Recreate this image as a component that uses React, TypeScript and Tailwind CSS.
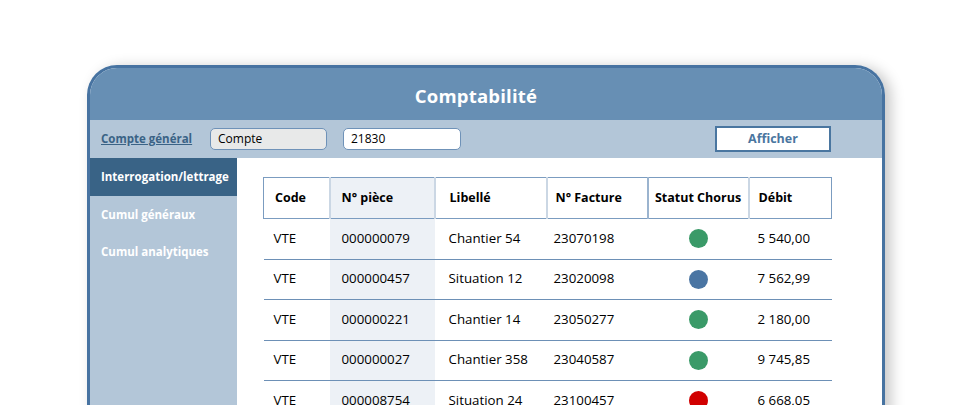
import React from 'react';

const rows = [
  { code: 'VTE', piece: '000000079', libelle: 'Chantier 54', facture: '23070198', statut: 'green', debit: '5 540,00' },
  { code: 'VTE', piece: '000000457', libelle: 'Situation 12', facture: '23020098', statut: 'blue', debit: '7 562,99' },
  { code: 'VTE', piece: '000000221', libelle: 'Chantier 14', facture: '23050277', statut: 'green', debit: '2 180,00' },
  { code: 'VTE', piece: '000000027', libelle: 'Chantier 358', facture: '23040587', statut: 'green', debit: '9 745,85' },
  { code: 'VTE', piece: '000008754', libelle: 'Situation 24', facture: '23100457', statut: 'red', debit: '6 668,05' },
];

const dotColors: Record<string, string> = {
  green: 'bg-[#3a9a68]',
  blue: 'bg-[#4a75a3]',
  red: 'bg-[#d10000]',
};

export default function App() {
  return (
    <div className="h-[405px] w-[964px] overflow-hidden bg-white pt-[65px] pl-[87px] font-['Open_Sans',sans-serif] text-black">
      <div className="w-[798px] h-[420px] rounded-t-[30px] border-[3px] border-b-0 border-[#4773a1] overflow-hidden shadow-[6px_2px_14px_rgba(0,0,0,0.22)]">
        {/* title bar */}
        <div className="h-[52px] bg-[#678fb4] flex items-center justify-center pr-[20px]">
          <h1 className="text-white font-bold text-[18.5px] tracking-[0.2px] mt-[3px]">Comptabilité</h1>
        </div>

        {/* toolbar */}
        <div className="h-[38px] bg-[#b3c6d8] flex items-center pl-[11px] pr-[51px]">
          <a className="text-[11.5px] font-bold text-[#3a6386] underline w-[109px]">Compte général</a>
          <div className="w-[117px] h-[22px] rounded-[5px] border border-[#6f92b8] bg-[#e8e9e9] text-[12px] flex items-center pl-[7px]">
            Compte
          </div>
          <div className="ml-[16px] w-[118px] h-[22px] rounded-[5px] border border-[#6f92b8] bg-white text-[12px] flex items-center pl-[7px]">
            21830
          </div>
          <button className="ml-auto w-[116px] h-[26px] border-2 border-[#4a76a0] bg-white text-[12.5px] font-bold text-[#4a76a0]">
            Afficher
          </button>
        </div>

        {/* body */}
        <div className="flex h-full">
          <nav className="w-[147px] shrink-0 bg-[#b3c6d8]">
            <div className="h-[38px] bg-[#396386] text-white text-[11.5px] font-bold flex items-center pl-[11px]">
              Interrogation/lettrage
            </div>
            <div className="h-[37px] text-white text-[11.5px] font-bold flex items-center pl-[11px]">Cumul généraux</div>
            <div className="h-[37px] text-white text-[11.5px] font-bold flex items-center pl-[11px]">Cumul analytiques</div>
          </nav>

          <div className="flex-1 bg-white pt-[19px] pl-[26px]">
            <table className="w-[568px] border-collapse table-fixed text-[13.3px]">
              <colgroup>
                <col className="w-[66px]" />
                <col className="w-[105px]" />
                <col className="w-[112px]" />
                <col className="w-[101px]" />
                <col className="w-[101px]" />
                <col className="w-[83px]" />
              </colgroup>
              <thead>
                <tr className="h-[41px] text-[12.5px] font-bold">
                  <th className="text-left pl-[11px] border border-[#7b9cc0] border-r-2 border-r-[#cbd7e4]">Code</th>
                  <th className="text-left pl-[11px] bg-[#edf1f6] border-y border-[#7b9cc0] border-r-2 border-r-[#cbd7e4]">N° pièce</th>
                  <th className="text-left pl-[14px] border-y border-[#7b9cc0] border-r-2 border-r-[#cbd7e4]">Libellé</th>
                  <th className="text-left pl-[8px] border-y border-[#7b9cc0] border-r-2 border-r-[#9bb4cf]">N° Facture</th>
                  <th className="text-center border-y border-[#7b9cc0] border-r-2 border-r-[#cbd7e4]">Statut Chorus</th>
                  <th className="text-left pl-[9px] border border-[#7b9cc0] border-l-0">Débit</th>
                </tr>
              </thead>
              <tbody>
                {rows.map((r) => (
                  <tr key={r.piece} className="h-[40.5px] border-b border-[#6d90b6]">
                    <td className="pl-[10px]">{r.code}</td>
                    <td className="pl-[12px] bg-[#edf1f6]">{r.piece}</td>
                    <td className="pl-[14px]">{r.libelle}</td>
                    <td className="pl-[7px]">{r.facture}</td>
                    <td>
                      <div className={`mx-auto w-[19px] h-[19px] rounded-full ${dotColors[r.statut]}`} />
                    </td>
                    <td className="pl-[9px]">{r.debit}</td>
                  </tr>
                ))}
              </tbody>
            </table>
          </div>
        </div>
      </div>
    </div>
  );
}
